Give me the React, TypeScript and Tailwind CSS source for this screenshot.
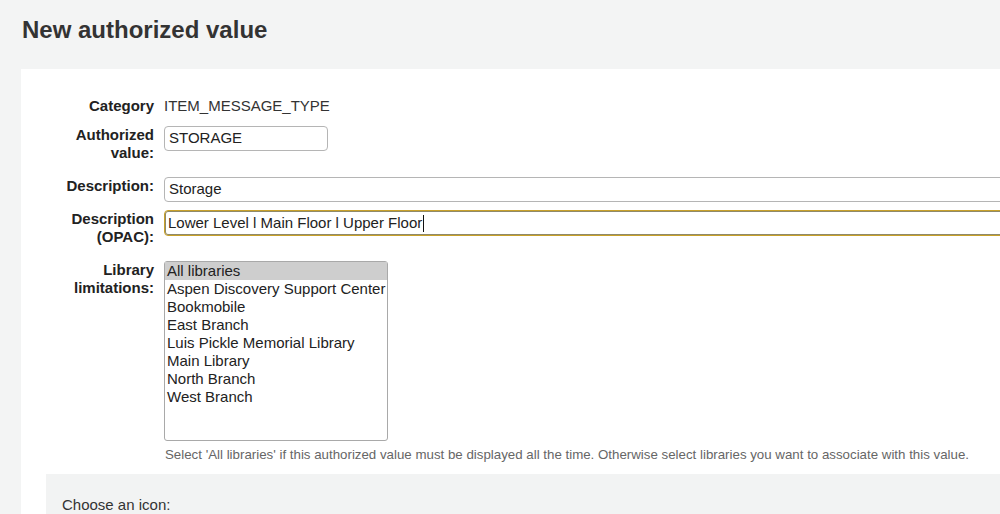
import React from "react";

const libraries = [
  "All libraries",
  "Aspen Discovery Support Center",
  "Bookmobile",
  "East Branch",
  "Luis Pickle Memorial Library",
  "Main Library",
  "North Branch",
  "West Branch",
];

function Label({ children }: { children: React.ReactNode }) {
  return (
    <div className="w-[108px] shrink-0 text-right text-[15px] font-bold leading-[18px] text-[#222]">
      {children}
    </div>
  );
}

export default function App() {
  return (
    <div
      className="h-[514px] w-[1000px] overflow-hidden bg-[#f3f4f4] text-[#222]"
      style={{ fontFamily: '"Liberation Sans", Arial, sans-serif' }}
    >
      <h1 className="ml-[22px] pt-[16px] text-[24px] font-bold leading-[28px] text-[#333]">
        New authorized value
      </h1>

      <div className="ml-[21px] mt-[25px] w-[1200px] bg-white pl-[25px] pt-[28px]">
        {/* Category */}
        <div className="flex gap-[10px]">
          <Label>Category</Label>
          <div className="text-[15px] leading-[18px] text-[#333]">ITEM_MESSAGE_TYPE</div>
        </div>

        {/* Authorized value */}
        <div className="mt-[11px] flex gap-[10px]">
          <Label>
            Authorized
            <br />
            value:
          </Label>
          <div className="flex h-[25px] w-[164px] items-center rounded-[4px] border border-[#b5b5b5] px-[4px] text-[15px] text-[#222]">
            STORAGE
          </div>
        </div>

        {/* Description */}
        <div className="mt-[15px] flex gap-[10px]">
          <Label>Description:</Label>
          <div className="flex h-[25px] w-[900px] items-center rounded-[4px] border border-[#b5b5b5] px-[4px] text-[15px] text-[#222]">
            Storage
          </div>
        </div>

        {/* Description OPAC */}
        <div className="mt-[8px] flex gap-[10px]">
          <Label>
            Description
            <br />
            (OPAC):
          </Label>
          <div className="flex h-[26px] w-[900px] items-center rounded-[4px] border border-[#c9a12a] px-[3px] text-[15px] text-[#222] shadow-[inset_0_0_0_1px_#8f8a6a]">
            Lower Level l Main Floor l Upper Floor
            <span className="ml-[1px] inline-block h-[17px] w-[1px] bg-[#111]" />
          </div>
        </div>

        {/* Library limitations */}
        <div className="mt-[15px] flex gap-[10px]">
          <Label>
            Library
            <br />
            limitations:
          </Label>
          <div>
            <div className="h-[180px] w-[224px] rounded-[3px] border border-[#a9a9a9]">
              {libraries.map((lib, i) => (
                <div
                  key={lib}
                  className={
                    "h-[18px] whitespace-nowrap px-[2px] text-[15px] leading-[18px] text-[#222] " +
                    (i === 0 ? "bg-[#cecece]" : "")
                  }
                >
                  {lib}
                </div>
              ))}
            </div>
            <div className="mt-[6px] whitespace-nowrap pl-[1px] text-[13.3px] leading-[16px] text-[#666]">
              Select 'All libraries' if this authorized value must be displayed all the time. Otherwise select
              libraries you want to associate with this value.
            </div>
          </div>
        </div>

        {/* Icon chooser */}
        <div className="mt-[11px] h-[60px] bg-[#f2f3f3] pl-[16px] pt-[22px]">
          <div className="text-[15px] leading-[18px] text-[#333]">Choose an icon:</div>
        </div>
      </div>
    </div>
  );
}
